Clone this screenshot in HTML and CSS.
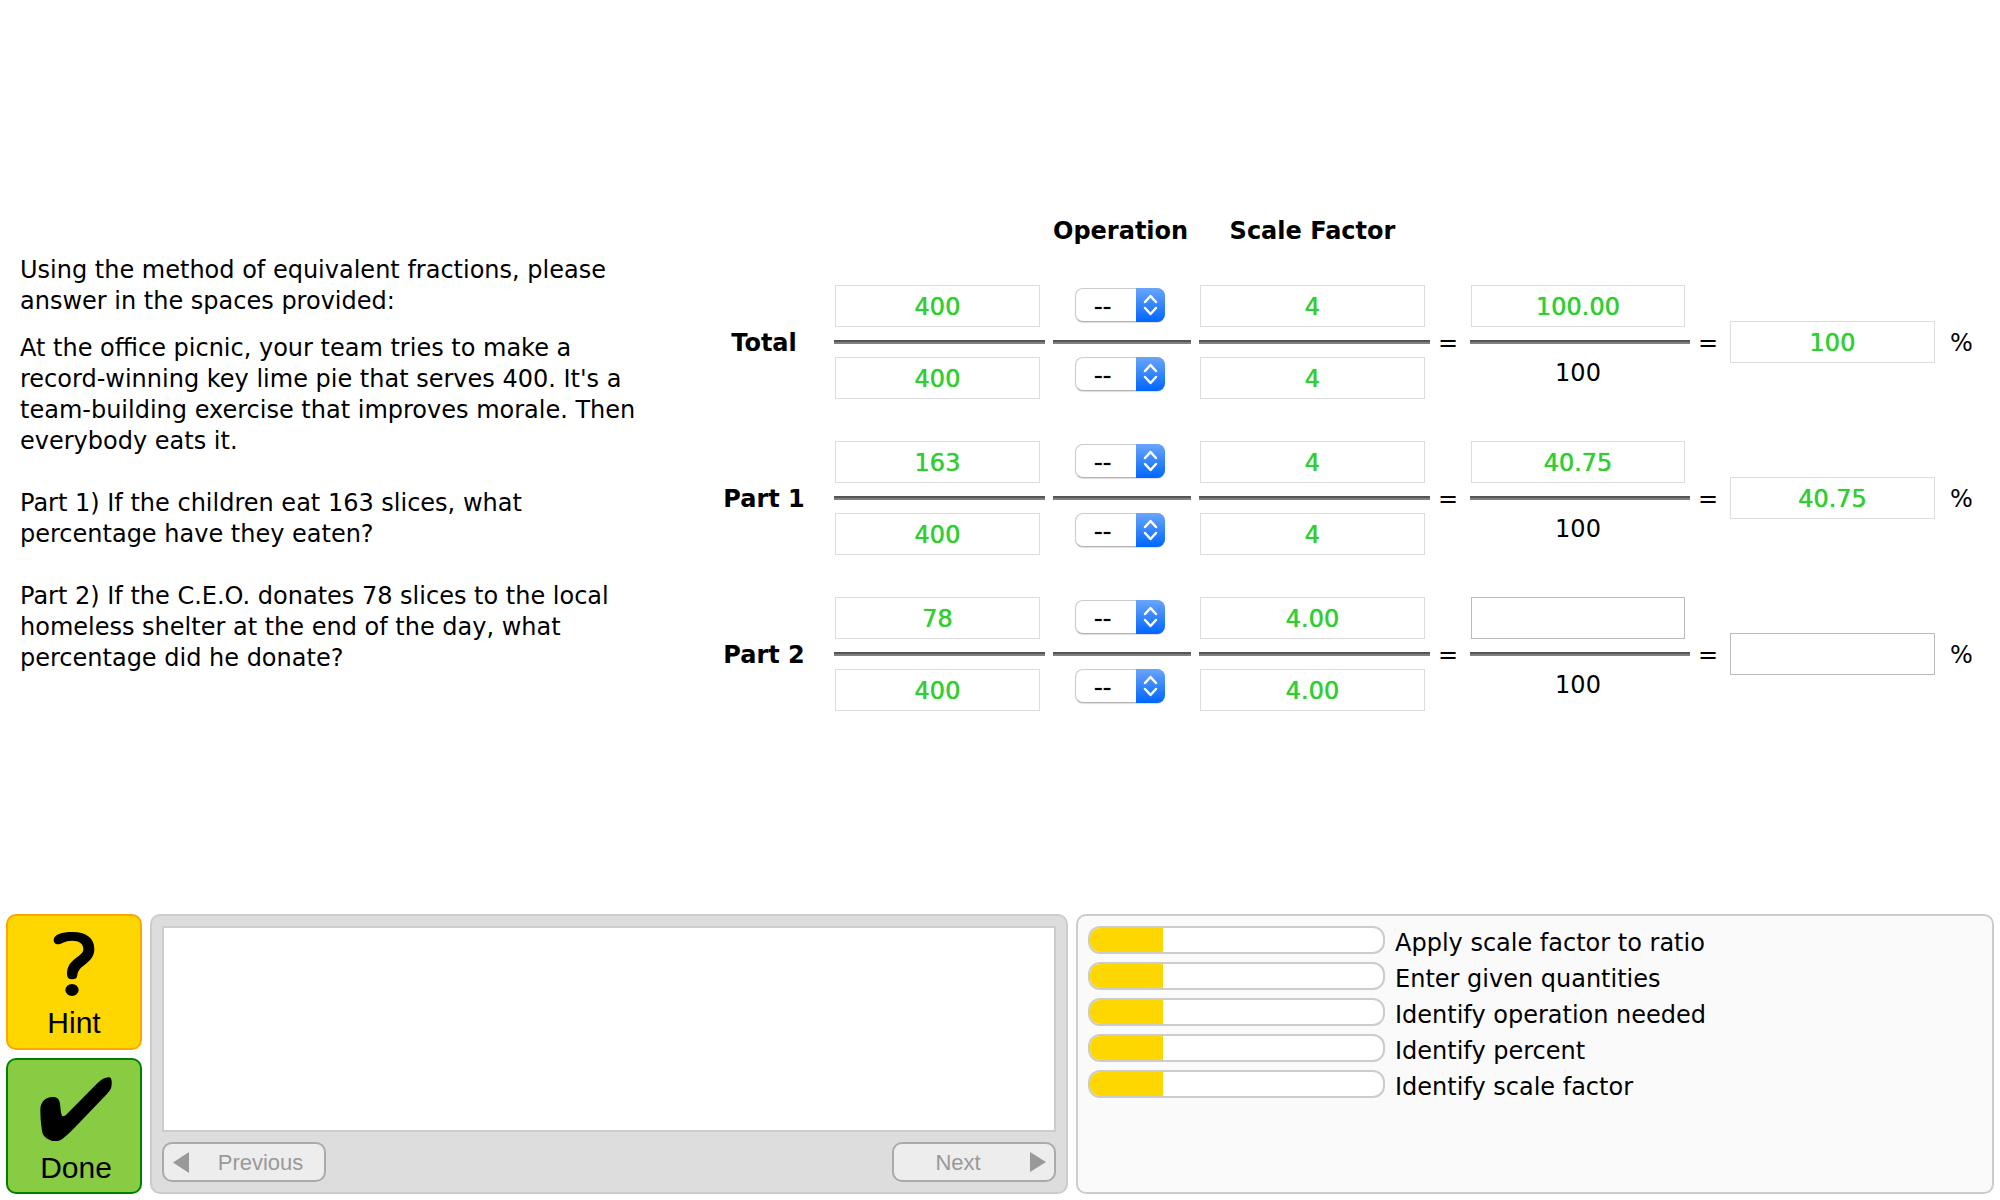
FILE: index.html
```html
<!DOCTYPE html>
<html lang="en">
<head>
<meta charset="utf-8">
<meta name="viewport" content="width=device-width, initial-scale=1">
<title>Equivalent Fractions</title>
<link rel="stylesheet" href="styles.css">
</head>
<body>
<main class="tutor">
  <section class="problem">
    <p>Using the method of equivalent fractions, please<br>answer in the spaces provided:</p>
    <p>At the office picnic, your team tries to make a<br>record-winning key lime pie that serves 400. It's a<br>team-building exercise that improves morale. Then<br>everybody eats it.<br><br>Part 1) If the children eat 163 slices, what<br>percentage have they eaten?<br><br>Part 2) If the C.E.O. donates 78 slices to the local<br>homeless shelter at the end of the day, what<br>percentage did he donate?</p>
  </section>
  <section class="worksheet" id="worksheet">
    <div class="row head">
      <span class="op-head">Operation</span>
      <span class="scale-head">Scale Factor</span>
    </div>
  </section>
</main>
<footer class="dock">
  <div class="actions">
    <button class="action hint" type="button">
      <svg width="72" height="64" viewBox="0 0 216 192" aria-hidden="true"><path d="M59 37C51 37 47 31 47 24C47 8 72 0 103 0C145 0 169 18 169 51C169 72 158 84 142 97C126 109 119 117 118 130C117 139 111 142 102 142C92 142 87 136 87 126C87 103 98 89 115 77C130 66 136 61 136 51C136 35 124 26 102 26C78 26 72 37 59 37Z"/><ellipse cx="102" cy="174" rx="20" ry="18"/></svg>
      <span>Hint</span>
    </button>
    <button class="action done" type="button">
      <svg width="72" height="64" viewBox="0 0 216 192" aria-hidden="true"><path d="M1 96C2 76 15 60 38 60C53 60 58 67 60 80C62 98 63 114 68 118C74 119 80 112 86 106L172 19C184 7 195 1 206 1C214 1 216 9 215 22C215 33 211 40 203 49L103 153C91 166 78 177 67 186C54 195 38 195 25 187C9 178 7 171 5 154C2 134 1 115 1 96Z"/></svg>
      <span>Done</span>
    </button>
  </div>
  <section class="panel hints">
    <div class="hint-text"></div>
    <div class="pager">
      <button class="page prev" type="button" disabled><svg width="16" height="21" viewBox="0 0 16 21" aria-hidden="true"><path d="M0 10.5L16 0V21Z"/></svg><span>Previous</span></button>
      <button class="page next" type="button" disabled><span>Next</span><svg width="16" height="20" viewBox="0 0 16 20" aria-hidden="true"><path d="M16 10L0 0V20Z"/></svg></button>
    </div>
  </section>
  <section class="panel skills">
    <div class="skill"><div class="bar"><div class="fill" style="width:25%"></div></div><span>Apply scale factor to ratio</span></div>
    <div class="skill"><div class="bar"><div class="fill" style="width:25%"></div></div><span>Enter given quantities</span></div>
    <div class="skill"><div class="bar"><div class="fill" style="width:25%"></div></div><span>Identify operation needed</span></div>
    <div class="skill"><div class="bar"><div class="fill" style="width:25%"></div></div><span>Identify percent</span></div>
    <div class="skill"><div class="bar"><div class="fill" style="width:25%"></div></div><span>Identify scale factor</span></div>
  </section>
</footer>
<script src="worksheet.js"></script>
</body>
</html>
```
FILE: styles.css
```css
* { box-sizing: border-box; }

body {
  margin: 0;
  min-height: 100vh;
  display: flex;
  flex-direction: column;
  background: #fff;
  color: #000;
  font: 24px/31px Verdana, "DejaVu Sans", sans-serif;
}

.tutor {
  display: flex;
  align-items: flex-start;
  padding: 214px 20px 40px 0;
}

.problem {
  flex: 0 0 702px;
  padding: 41px 20px 0;
}

.problem p { margin: 0 0 16px; }

.worksheet {
  flex: 1;
  min-width: 0;
  display: flex;
  flex-direction: column;
  gap: 42px;
}

.row {
  display: grid;
  grid-template-columns: 124px minmax(0, 211fr) 138px minmax(0, 231fr) 24px minmax(0, 220fr) 24px minmax(0, 212fr) 30px;
  column-gap: 8px;
  align-items: center;
}

.head {
  height: 29px;
  padding-top: 2px;
  font-weight: bold;
  text-align: center;
}

.op-head { grid-column: 3; padding-right: 4px; white-space: nowrap; }
.scale-head { grid-column: 4; padding-right: 4px; white-space: nowrap; }

.row-label { font-weight: bold; text-align: center; }

.row-label, .equals, .unit { padding-top: 2px; }

.fraction {
  display: flex;
  flex-direction: column;
  gap: 13px;
}

.rule {
  height: 4px;
  margin: 0;
  border: 0;
  border-top: 2px solid #555;
  background: #808080;
}

.slot {
  height: 42px;
  padding: 0 5px 0 1px;
  display: flex;
  justify-content: center;
}

.slot.top { align-items: center; }
.slot.bottom { align-items: flex-start; }

.slot.top .picker { margin-bottom: 2px; }

.constant { padding-top: 1px; }

.answer {
  width: 100%;
  height: 42px;
  padding: 2px 0 0;
  border: 1px solid #bbb;
  background: #fff;
  color: #32cd32;
  font: inherit;
  text-align: center;
}

.answer:disabled {
  border-color: #ddd;
  -webkit-text-fill-color: #32cd32;
  text-shadow: 0 0 1px #32cd32;
}

.percent { padding: 0 7px 0 0; }
.equals { padding-right: 5px; text-align: center; }

.picker {
  position: relative;
  width: 90px;
  height: 34px;
}

.picker select {
  appearance: none;
  width: 100%;
  height: 100%;
  padding: 3px 0 0 18px;
  border: 1px solid #ccc;
  border-bottom-color: #b4b4b4;
  border-radius: 8px;
  box-shadow: 0 1px 1px #ddd;
  background: #fff;
  color: #000;
  font: inherit;
  text-shadow: 0 0 1px #000;
}

.picker svg {
  position: absolute;
  top: 0;
  right: 0;
  border-radius: 0 8px 8px 0;
  background: linear-gradient(#6aa5fb, #0066ff);
  pointer-events: none;
}

.picker path {
  fill: none;
  stroke: #fff;
  stroke-width: 2.5;
  stroke-linecap: round;
  stroke-linejoin: round;
}

.dock {
  margin-top: auto;
  padding: 6px;
  display: grid;
  grid-template-columns: 136px minmax(0, 1fr) minmax(0, 1fr);
  gap: 8px;
}

.actions {
  display: flex;
  flex-direction: column;
  gap: 8px;
}

.action {
  height: 136px;
  padding: 8px 0 0;
  display: flex;
  flex-direction: column;
  align-items: center;
  justify-content: center;
  gap: 10px;
  border: 2px solid;
  border-radius: 10px;
  color: #000;
  font: 30px/34px Helvetica, "Liberation Sans", sans-serif;
}

.hint { background: #ffd700; border-color: #ffa500; }
.done { padding: 10px 0 0 4px; background: #88cc44; border-color: #008000; }

.panel {
  padding: 10px;
  border: 2px solid #ccc;
  border-radius: 10px;
}

.hints {
  display: flex;
  flex-direction: column;
  gap: 10px;
  background: #ddd;
}

.hint-text {
  flex: 1;
  border: 2px solid #ccc;
  background: #fff;
}

.pager {
  display: flex;
  justify-content: space-between;
}

.page {
  width: 164px;
  height: 40px;
  padding: 0;
  display: flex;
  align-items: center;
  gap: 8px;
  border: 2px solid #aaa;
  border-radius: 10px;
  background: #ededed;
  color: #999;
  font: 22px/26px Helvetica, "Liberation Sans", sans-serif;
}

.page span { flex: 1; padding-top: 1px; }
.page svg { fill: #999; }
.prev { padding-left: 9px; }
.next { padding-right: 8px; }

.skills {
  display: flex;
  flex-direction: column;
  gap: 8px;
  background: #fafafa;
}

.skill {
  height: 28px;
  display: flex;
  gap: 10px;
}

.skill span { padding-top: 2px; }

.bar {
  width: 297px;
  height: 28px;
  border: 2px solid #ccc;
  border-radius: 12px;
  background: #fff;
  overflow: hidden;
}

.fill { height: 100%; background: #ffd700; }
```
FILE: worksheet.js
```js
const rows = [
  { label: "Total", top: "400", bottom: "400", scale: "4", result: "100.00", percent: "100" },
  { label: "Part 1", top: "163", bottom: "400", scale: "4", result: "40.75", percent: "40.75" },
  { label: "Part 2", top: "78", bottom: "400", scale: "4.00", result: "", percent: "" }
];

const answer = (value, name) =>
  `<input class="answer" type="text" aria-label="${name}" value="${value}"${value ? " disabled" : ""}>`;

const picker = name =>
  `<span class="picker"><select aria-label="${name}"><option>--</option><option>×</option><option>÷</option></select>
   <svg width="29" height="34" viewBox="0 0 29 34" aria-hidden="true"><path d="M9 14L14.500 8L20 14M9 20L14.500 26L20 20"/></svg></span>`;

const fraction = (top, bottom) =>
  `<div class="fraction"><div class="slot top">${top}</div><hr class="rule"><div class="slot bottom">${bottom}</div></div>`;

document.getElementById("worksheet").insertAdjacentHTML("beforeend", rows.map(r => `
  <div class="row">
    <span class="row-label">${r.label}</span>
    ${fraction(answer(r.top, r.label + " numerator"), answer(r.bottom, r.label + " denominator"))}
    ${fraction(picker(r.label + " numerator operation"), picker(r.label + " denominator operation"))}
    ${fraction(answer(r.scale, r.label + " numerator scale factor"), answer(r.scale, r.label + " denominator scale factor"))}
    <span class="equals">=</span>
    ${fraction(answer(r.result, r.label + " scaled numerator"), '<span class="constant">100</span>')}
    <span class="equals">=</span>
    <div class="percent">${answer(r.percent, r.label + " percent")}</div>
    <span class="unit">%</span>
  </div>`).join(""));
```
